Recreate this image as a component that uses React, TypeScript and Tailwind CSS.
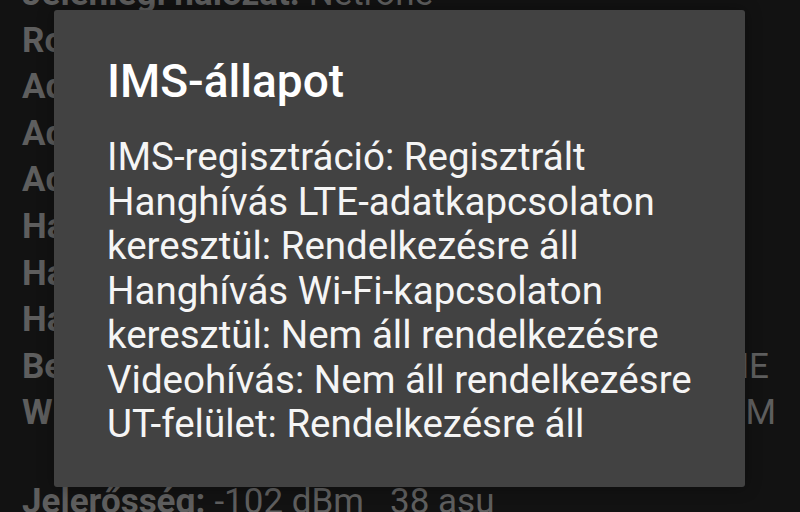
import React from "react";

type Row = { label: string; value: string };

const rows: Row[] = [
  { label: "Jelenlegi hálózat:", value: "Netrone" },
  { label: "Roaming:", value: "Nincs roaming" },
  { label: "Adatszolgáltatás:", value: "Csatlakozva" },
  { label: "Adathálózat típusa:", value: "LTE" },
  { label: "Adatátvitel:", value: "Nincs" },
  { label: "Hangszolgáltatás:", value: "Szolgáltatás" },
  { label: "Hanghálózat típusa:", value: "LTE" },
  { label: "Hanghívás állapota:", value: "Tétlen" },
];

export default function App() {
  return (
    <div
      className="relative w-[800px] h-[512px] overflow-hidden bg-[#121212]"
      style={{ fontFamily: "Roboto, 'Noto Sans', sans-serif" }}
    >
      <div className="-mt-[29px] pl-[22px] text-[35px] leading-[46.6px] text-[#5e5e5e]">
        {rows.map((r, i) => (
          <div key={i} className="flex whitespace-nowrap">
            <span className="font-bold">{r.label}</span>
            <span className="ml-[9px]">{r.value}</span>
          </div>
        ))}
        <div className="flex whitespace-nowrap">
          <span className="font-bold">Beszédhálózat:</span>
          <span className="ml-auto pr-[31px]">NONE</span>
        </div>
        <div className="flex whitespace-nowrap">
          <span className="font-bold">WFC állapot:</span>
          <span className="ml-auto pr-[24px]">GSM</span>
        </div>
        <div className="mt-[42px] flex whitespace-nowrap">
          <span className="font-bold">Jelerősség:</span>
          <span className="ml-[9px]">-102 dBm&nbsp;&nbsp;&nbsp;38 asu</span>
        </div>
      </div>

      <div className="absolute left-[54px] top-[10px] w-[691px] h-[477px] rounded-[3px] bg-[#424242] shadow-[0_0_16px_rgba(0,0,0,0.35)] pl-[53px] pt-[44px]">
        <div className="text-[46px] leading-[54px] font-medium text-white">IMS-állapot</div>
        <div className="mt-[27px] text-[38.5px] leading-[44.5px] text-[#f5f5f5]">
          <div>IMS-regisztráció: Regisztrált</div>
          <div>Hanghívás LTE-adatkapcsolaton</div>
          <div>keresztül: Rendelkezésre áll</div>
          <div>Hanghívás Wi-Fi-kapcsolaton</div>
          <div>keresztül: Nem áll rendelkezésre</div>
          <div>Videohívás: Nem áll rendelkezésre</div>
          <div>UT-felület: Rendelkezésre áll</div>
        </div>
      </div>
    </div>
  );
}
